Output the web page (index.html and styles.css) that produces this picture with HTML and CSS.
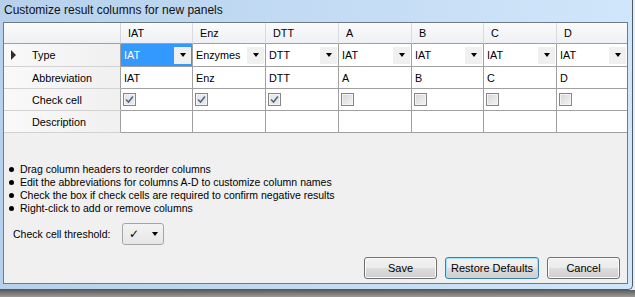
FILE: index.html
```html
<!DOCTYPE html>
<html lang="en">
<head>
  <meta charset="UTF-8">
  <title>Customize result columns for new panels</title>
  <link rel="stylesheet" href="styles.css">
</head>
<body>
  <div class="window">
    <div class="titlebar">Customize result columns for new panels</div>

    <div class="client">
      <div class="grid">
        <div class="corner"></div>
        <div class="colhead">IAT</div>
        <div class="colhead">Enz</div>
        <div class="colhead">DTT</div>
        <div class="colhead">A</div>
        <div class="colhead">B</div>
        <div class="colhead">C</div>
        <div class="colhead last">D</div>

        <div class="rowhead current"><span class="marker"></span>Type</div>
        <div class="cell combo selected"><span>IAT</span><span class="drop"></span></div>
        <div class="cell combo"><span>Enzymes</span><span class="drop"></span></div>
        <div class="cell combo"><span>DTT</span><span class="drop"></span></div>
        <div class="cell combo"><span>IAT</span><span class="drop"></span></div>
        <div class="cell combo"><span>IAT</span><span class="drop"></span></div>
        <div class="cell combo"><span>IAT</span><span class="drop"></span></div>
        <div class="cell combo last"><span>IAT</span><span class="drop"></span></div>

        <div class="rowhead">Abbreviation</div>
        <div class="cell">IAT</div>
        <div class="cell">Enz</div>
        <div class="cell">DTT</div>
        <div class="cell">A</div>
        <div class="cell">B</div>
        <div class="cell">C</div>
        <div class="cell last">D</div>

        <div class="rowhead">Check cell</div>
        <div class="cell"><span class="chk on"><svg width="9" height="9" viewBox="0 0 9 9"><path d="M1 4.5 L3.5 7 L8 1.5" fill="none" stroke="#51668f" stroke-width="1.6"/></svg></span></div>
        <div class="cell"><span class="chk on"><svg width="9" height="9" viewBox="0 0 9 9"><path d="M1 4.5 L3.5 7 L8 1.5" fill="none" stroke="#51668f" stroke-width="1.6"/></svg></span></div>
        <div class="cell"><span class="chk on"><svg width="9" height="9" viewBox="0 0 9 9"><path d="M1 4.5 L3.5 7 L8 1.5" fill="none" stroke="#51668f" stroke-width="1.6"/></svg></span></div>
        <div class="cell"><span class="chk"></span></div>
        <div class="cell"><span class="chk"></span></div>
        <div class="cell"><span class="chk"></span></div>
        <div class="cell last"><span class="chk"></span></div>

        <div class="rowhead">Description</div>
        <div class="cell"></div>
        <div class="cell"></div>
        <div class="cell"></div>
        <div class="cell"></div>
        <div class="cell"></div>
        <div class="cell"></div>
        <div class="cell last"></div>
      </div>

      <ul class="notes">
        <li>Drag column headers to reorder columns</li>
        <li>Edit the abbreviations for columns A-D to customize column names</li>
        <li>Check the box if check cells are required to confirm negative results</li>
        <li>Right-click to add or remove columns</li>
      </ul>

      <div class="threshold">
        <span class="label">Check cell threshold:</span>
        <div class="picker"><span class="tick">&#10003;</span><span class="arrow"></span></div>
      </div>

      <div class="actions">
        <button class="btn">Save</button>
        <button class="btn default">Restore Defaults</button>
        <button class="btn">Cancel</button>
      </div>
    </div>
  </div>
</body>
</html>
```

FILE: styles.css
```css
body {
  margin: 0;
  width: 635px;
  height: 297px;
  overflow: hidden;
  font-family: "Liberation Sans", Arial, sans-serif;
  font-size: 10.5px;
  color: #000;
  background: linear-gradient(to bottom, #e6edf4 0, #e6edf4 290px, #5c5c5c 290px, #9a9a9a 297px);
}

.window {
  width: 633px;
  height: 290px;
  box-sizing: border-box;
  display: flex;
  flex-direction: column;
  padding: 0 4px 5px 3px;
  border-right: 1px solid #4d5a66;
  border-bottom: 1px solid #4d5a66;
  border-bottom-right-radius: 5px;
  background: linear-gradient(to right, #b7d1ec, #c4dcf4 55%, #d0e6fa);
}

.titlebar {
  height: 22px;
  line-height: 20px;
  padding-left: 1px;
  font-size: 12px;
  color: #111;
  white-space: nowrap;
}

.client {
  flex: 1;
  display: flex;
  flex-direction: column;
  background: #f0f0f0;
  border: 1px solid #6d7b89;
}

/* data grid */
.grid {
  display: grid;
  grid-template-columns: 117px 72px 73px 73px 73px 72px 73px 1fr;
  grid-template-rows: 21px 23px 22px 22px 22px;
  background: #fff;
  font-size: 10.8px;
}

.grid > div {
  box-sizing: border-box;
  border-right: 1px solid #a0a0a0;
  border-bottom: 1px solid #a0a0a0;
  display: flex;
  align-items: center;
  white-space: nowrap;
}

.grid > .last {
  border-right: none;
}

.corner {
  background: linear-gradient(#fbfbfb, #eef0f2);
  border-right-color: #d5d5d5 !important;
}

.colhead {
  padding-left: 7px;
  background: linear-gradient(#fbfbfc, #eef0f3);
  border-right-color: #d9dbde !important;
}

.rowhead {
  padding-left: 28px;
  background: linear-gradient(to right, #f9f9f9, #f0f0f0);
  border-bottom-color: #d2d2d2 !important;
}

.rowhead.current {
  padding-left: 7px;
}

.marker {
  width: 0;
  height: 0;
  margin-right: 16px;
  border-top: 5px solid transparent;
  border-bottom: 5px solid transparent;
  border-left: 5px solid #2e2e2e;
}

.cell {
  padding-left: 3px;
}

.combo {
  justify-content: space-between;
  padding-right: 1px;
}

.combo.selected {
  background: #3399ff;
  color: #fff;
}

.drop {
  width: 17px;
  height: 17px;
  background: #f0f0f0;
  display: flex;
  align-items: center;
  justify-content: center;
}

.drop::after,
.arrow::after {
  content: "";
  border-left: 3.5px solid transparent;
  border-right: 3.5px solid transparent;
  border-top: 4px solid #000;
}

.chk {
  width: 13px;
  height: 13px;
  box-sizing: border-box;
  margin-left: -1px;
  border: 1px solid #858686;
  background: linear-gradient(135deg, #d6d6d6, #f4f4f4);
  box-shadow: inset 0 0 0 1px #f4f4f4;
  display: flex;
  align-items: center;
  justify-content: center;
}

.chk.on {
  background: #e8e8e8;
}

/* hints */
.notes {
  list-style: none;
  margin: 30px 0 0;
  padding: 0 0 0 5px;
  line-height: 13px;
}

.notes li {
  display: flex;
  align-items: center;
  white-space: nowrap;
}

.notes li::before {
  content: "";
  width: 5px;
  height: 5px;
  border-radius: 50%;
  background: #000;
  margin-right: 6px;
}

.threshold {
  display: flex;
  align-items: center;
  margin-top: 8px;
  padding-left: 9px;
}

.threshold .label {
  width: 109px;
}

.picker {
  width: 42px;
  height: 22px;
  box-sizing: border-box;
  border: 1px solid #a6a6a6;
  border-radius: 3px;
  background: linear-gradient(#f3f3f3, #e6e6e6);
  display: flex;
  align-items: center;
  justify-content: space-between;
  padding: 0 5px 0 6px;
}

.tick {
  font-family: "DejaVu Sans", sans-serif;
  font-size: 12px;
}

.arrow {
  display: flex;
}

.actions {
  display: flex;
  justify-content: flex-end;
  gap: 8px;
  margin-top: 12px;
  padding-right: 7px;
}

.btn {
  height: 22px;
  width: 73px;
  padding: 0;
  font-family: inherit;
  font-size: 11px;
  color: #000;
  border: 1px solid #707070;
  border-radius: 3px;
  background: linear-gradient(#f2f2f2 0, #ebebeb 50%, #dddddd 50%, #cfcfcf 100%);
  box-shadow: inset 0 0 0 1px #fbfbfb;
}

.btn.default {
  width: 94px;
  border-color: #3c7fb1;
  box-shadow: inset 0 0 0 1px #9ee3fb;
}
```
